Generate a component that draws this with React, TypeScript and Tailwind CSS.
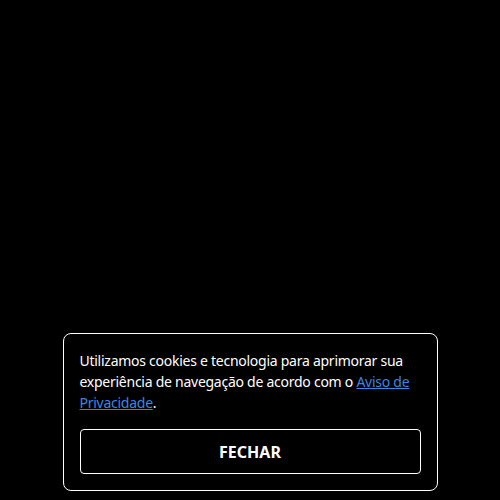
export default function App() {
  return (
    <div className="h-[500px] w-[500px] bg-black flex flex-col justify-end items-center pb-[9px]" style={{ fontFamily: '"Noto Sans", "Open Sans", sans-serif' }}>
      {/* Cookie banner */}
      <div className="w-[375px] rounded-lg border border-white bg-black px-4 pt-4 pb-4">
        <p className="text-[14px] leading-[21px] tracking-[-0.26px] text-white">
          Utilizamos cookies e tecnologia para aprimorar sua experiência de navegação de acordo com o{' '}
          <a href="#" className="text-[#3d85e0] underline">Aviso de Privacidade</a>.
        </p>
        <button className="mt-4 h-[45px] w-full rounded border border-white bg-black text-[16px] font-bold text-white">
          FECHAR
        </button>
      </div>
    </div>
  );
}
